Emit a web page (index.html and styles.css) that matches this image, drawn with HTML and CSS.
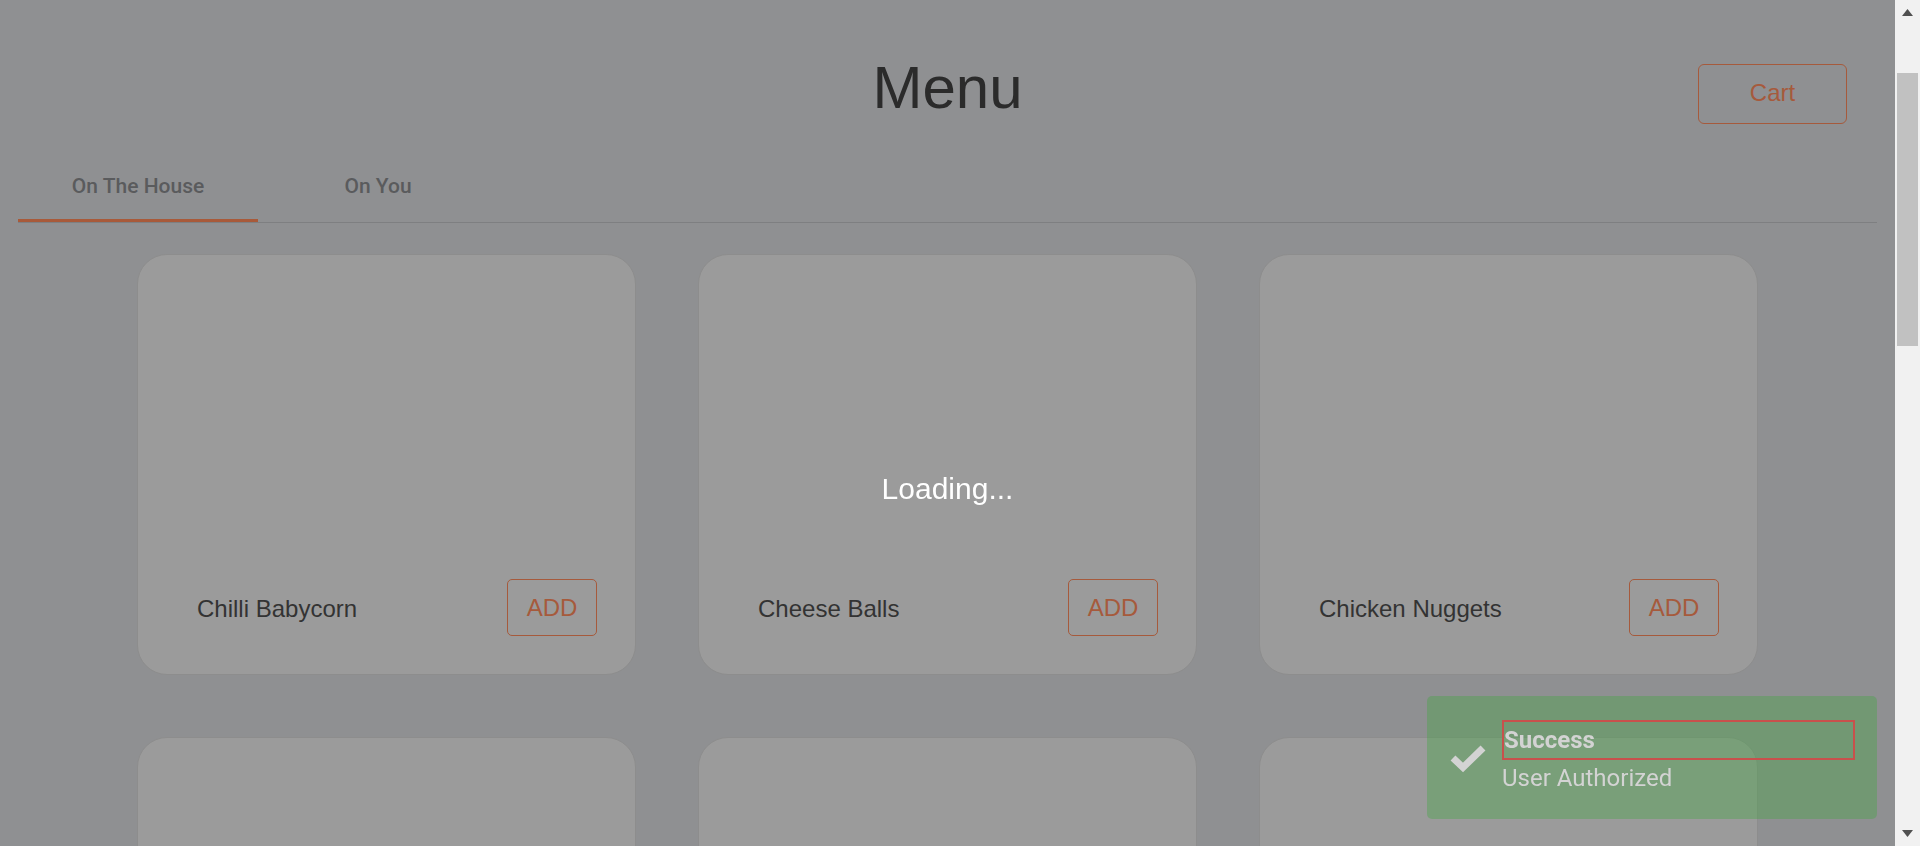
FILE: index.html
```html
<!DOCTYPE html>
<html lang="en">
<head>
<meta charset="utf-8">
<title>Menu</title>
<link rel="stylesheet" href="styles.css">
</head>
<body>
<div class="page">
  <main class="main">
    <header class="header">
      <div class="header-side"></div>
      <h1 class="title">Menu</h1>
      <div class="header-side header-right">
        <button class="cart-btn">Cart</button>
      </div>
    </header>

    <nav class="tabs">
      <div class="tab tab-active">On The House</div>
      <div class="tab">On You</div>
    </nav>

    <section class="grid">
      <div class="card">
        <div class="card-footer">
          <span class="card-name">Chilli Babycorn</span>
          <button class="add-btn">ADD</button>
        </div>
      </div>
      <div class="card">
        <div class="card-footer">
          <span class="card-name">Cheese Balls</span>
          <button class="add-btn">ADD</button>
        </div>
      </div>
      <div class="card">
        <div class="card-footer">
          <span class="card-name">Chicken Nuggets</span>
          <button class="add-btn">ADD</button>
        </div>
      </div>
      <div class="card"></div>
      <div class="card"></div>
      <div class="card"></div>
    </section>
  </main>

  <aside class="scrollbar">
    <div class="sb-btn">
      <svg width="11" height="7" viewBox="0 0 11 7"><polygon points="5.5,0 11,7 0,7" fill="#505050"/></svg>
    </div>
    <div class="sb-track">
      <div class="sb-thumb"></div>
    </div>
    <div class="sb-btn">
      <svg width="11" height="7" viewBox="0 0 11 7"><polygon points="0,0 11,0 5.5,7" fill="#505050"/></svg>
    </div>
  </aside>
</div>

<div class="loading-overlay">
  <span class="loading-text">Loading...</span>
</div>

<div class="toast">
  <div class="toast-icon">
    <svg width="38" height="30" viewBox="0 0 38 30">
      <path d="M4 14 L14 23.5 L34 4" fill="none" stroke="#d3d3d3" stroke-width="7" stroke-linejoin="miter" stroke-linecap="butt"/>
    </svg>
  </div>
  <div class="toast-body">
    <div class="toast-title">Success</div>
    <div class="toast-msg">User Authorized</div>
  </div>
</div>
</body>
</html>
```

FILE: styles.css
```css
* {
  box-sizing: border-box;
}

html, body {
  margin: 0;
  padding: 0;
  height: 846px;
  overflow: hidden;
}

body {
  background: #8f9092;
  font-family: "Liberation Sans", Arial, sans-serif;
}

.page {
  display: flex;
  height: 846px;
}

.main {
  flex: 1;
  min-width: 0;
  background: #8f9092;
}

/* Header */
.header {
  display: grid;
  grid-template-columns: 1fr auto 1fr;
  align-items: start;
  height: 122px;
  padding: 53px 48px 0;
}

.title {
  margin: 0;
  font-family: "Liberation Sans", Arial, sans-serif;
  font-weight: 400;
  font-size: 60px;
  line-height: 69px;
  color: #2b2b2b;
}

.header-right {
  display: flex;
  justify-content: flex-end;
}

.cart-btn {
  margin-top: 11px;
  width: 149px;
  height: 60px;
  background: transparent;
  border: 1px solid #a65a3c;
  border-radius: 6px;
  color: #a65a3c;
  font-family: "Liberation Sans", Arial, sans-serif;
  font-size: 24px;
  line-height: 55px;
  padding: 0 0 3px;
}

/* Tabs */
.tabs {
  display: flex;
  margin: 28px 18px 0;
  border-bottom: 1px solid #7e7f81;
}

.tab {
  width: 240px;
  text-align: center;
  font-family: Roboto, "Noto Sans", sans-serif;
  font-weight: 500;
  font-size: 21px;
  line-height: 66px;
  padding-top: 3px;
  color: #5a5b5d;
  border-bottom: 3px solid transparent;
}

.tab-active {
  border-bottom-color: #a85a3a;
}

/* Cards */
.grid {
  display: grid;
  grid-template-columns: repeat(3, 499px);
  grid-auto-rows: 421px;
  gap: 62px;
  justify-content: center;
  margin-top: 31px;
}

.card {
  background: #9b9b9b;
  border: 1px solid #8d8d8d;
  border-radius: 30px;
  display: flex;
  flex-direction: column;
  justify-content: flex-end;
}

.card-footer {
  display: flex;
  align-items: center;
  justify-content: space-between;
  padding: 0 38px 38px 59px;
}

.card-name {
  font-family: "Liberation Sans", Arial, sans-serif;
  font-size: 24px;
  color: #333333;
  padding-top: 3px;
}

.add-btn {
  width: 90px;
  height: 57px;
  padding: 0;
  background: transparent;
  border: 1px solid #a65a3c;
  border-radius: 5px;
  color: #a65a3c;
  font-family: "Liberation Sans", Arial, sans-serif;
  font-size: 24px;
}

/* Scrollbar */
.scrollbar {
  width: 25px;
  flex: 0 0 25px;
  background: #f1f1f1;
  display: flex;
  flex-direction: column;
}

.sb-btn {
  height: 25px;
  display: flex;
  align-items: center;
  justify-content: center;
}

.sb-btn svg {
  display: block;
}

.sb-track {
  flex: 1;
  padding: 48px 2px 0;
}

.sb-thumb {
  height: 273px;
  background: #c1c1c1;
}

/* Loading overlay */
.loading-overlay {
  position: fixed;
  top: 0;
  left: 0;
  right: 25px;
  bottom: 0;
  display: flex;
  justify-content: center;
  align-items: flex-start;
  padding-top: 472px;
  pointer-events: none;
}

.loading-text {
  font-family: "Liberation Sans", Arial, sans-serif;
  font-size: 30px;
  line-height: 34px;
  color: #ffffff;
}

/* Toast */
.toast {
  position: fixed;
  right: 43px;
  bottom: 27px;
  width: 450px;
  display: flex;
  padding: 24px 22px 22px 0;
  background: rgba(70, 164, 71, 0.4);
  border-radius: 5px;
}

.toast-icon {
  width: 75px;
  flex: 0 0 75px;
  display: flex;
  align-items: center;
  justify-content: center;
  padding-left: 7px;
}

.toast-icon svg {
  display: block;
}

.toast-body {
  flex: 1;
  min-width: 0;
  color: #d3d3d3;
  font-family: Roboto, "Noto Sans", sans-serif;
}

.toast-title {
  border: 2px solid #c8504c;
  font-weight: 700;
  font-size: 24px;
  line-height: 36px;
}

.toast-msg {
  font-size: 24px;
  line-height: 37px;
}
```
